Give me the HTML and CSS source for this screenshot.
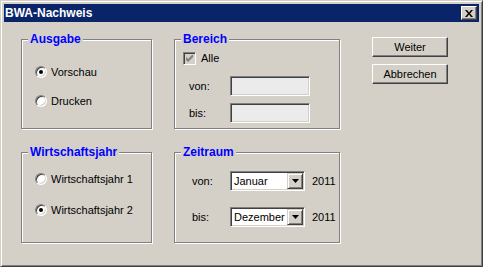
FILE: index.html
```html
<!DOCTYPE html>
<html>
<head>
    <title>BWA-Nachweis</title>
    <link rel="stylesheet" href="styles.css">
</head>
<body>
    <div class="window">
        <div class="titlebar">
            <span class="title">BWA-Nachweis</span>
            <span class="close-btn">
                <svg width="8" height="7" viewBox="0 0 8 7"><path d="M0 0h2l2 2.4L6 0h2L5 3.5 8 7H6L4 4.6 2 7H0l3-3.5z" fill="#000"/></svg>
            </span>
        </div>

        <div class="content">
            <div class="group group-ausgabe">
                <span class="group-title">Ausgabe</span>
                <div class="option"><span class="radio checked"></span>Vorschau</div>
                <div class="option"><span class="radio"></span>Drucken</div>
            </div>

            <div class="group group-bereich">
                <span class="group-title">Bereich</span>
                <div class="option check-row">
                    <span class="checkbox">
                        <svg width="7" height="7" viewBox="0 0 7 7"><path d="M0 2l2 2 5-5v3L2 7 0 5z" fill="#808080"/></svg>
                    </span>Alle
                </div>
                <div class="field-row"><span class="field-label">von:</span><span class="edit"></span></div>
                <div class="field-row"><span class="field-label">bis:</span><span class="edit"></span></div>
            </div>

            <div class="buttons">
                <div class="btn">Weiter</div>
                <div class="btn">Abbrechen</div>
            </div>

            <div class="group group-wj">
                <span class="group-title">Wirtschaftsjahr</span>
                <div class="option"><span class="radio"></span>Wirtschaftsjahr 1</div>
                <div class="option"><span class="radio checked"></span>Wirtschaftsjahr 2</div>
            </div>

            <div class="group group-zeitraum">
                <span class="group-title">Zeitraum</span>
                <div class="field-row">
                    <span class="field-label">von:</span>
                    <span class="combo"><span class="combo-text">Januar</span><span class="combo-btn"><svg width="7" height="4" viewBox="0 0 7 4"><path d="M0 0h7L3.5 4z" fill="#000"/></svg></span></span>
                    <span class="year">2011</span>
                </div>
                <div class="field-row">
                    <span class="field-label">bis:</span>
                    <span class="combo"><span class="combo-text">Dezember</span><span class="combo-btn"><svg width="7" height="4" viewBox="0 0 7 4"><path d="M0 0h7L3.5 4z" fill="#000"/></svg></span></span>
                    <span class="year">2011</span>
                </div>
            </div>
        </div>
    </div>
</body>
</html>
```

FILE: styles.css
```css
body {
    margin: 0;
    font-family: "Liberation Sans", Arial, sans-serif;
    font-size: 11px;
    color: #000;
}

.window {
    width: 483px;
    height: 267px;
    box-sizing: border-box;
    background-color: #D4D0C8;
    border: 1px solid;
    border-color: #D4D0C8 #404040 #404040 #D4D0C8;
    box-shadow: inset 1px 1px #fff, inset -1px -1px #808080;
    padding: 3px;
}

.titlebar {
    height: 18px;
    background-color: #0A246A;
    display: flex;
    align-items: center;
    justify-content: space-between;
    padding: 0 2px 0 1px;
}

.title {
    color: #fff;
    font-weight: bold;
    font-size: 12px;
    line-height: 18px;
}

.close-btn {
    width: 16px;
    height: 14px;
    box-sizing: border-box;
    background-color: #D4D0C8;
    border: 1px solid;
    border-color: #fff #404040 #404040 #fff;
    box-shadow: inset -1px -1px #808080;
    display: flex;
    align-items: center;
    justify-content: center;
}

.content {
    display: grid;
    grid-template-columns: 131px 166px 86px;
    grid-template-rows: 90px 91px;
    column-gap: 22px;
    row-gap: 23px;
    padding: 17px 0 0 17px;
}

.group {
    position: relative;
    box-sizing: border-box;
    border: 1px solid #808080;
    box-shadow: 1px 1px #fff, inset 1px 1px #fff;
    display: flex;
    flex-direction: column;
}

.group-title {
    position: absolute;
    top: -8px;
    left: 6px;
    padding: 0 2px;
    background-color: #D4D0C8;
    color: #0000FF;
    font-weight: bold;
    font-size: 12px;
    line-height: 14px;
}

.option {
    display: flex;
    align-items: center;
    height: 12px;
    line-height: 12px;
}

.group-ausgabe {
    padding: 26px 0 0 13px;
    gap: 17px;
}

.group-wj {
    padding: 20px 0 0 13px;
    gap: 19px;
}

.radio {
    position: relative;
    flex: none;
    width: 12px;
    height: 12px;
    box-sizing: border-box;
    border-radius: 50%;
    background-color: #fff;
    border: 1px solid;
    border-color: #808080 #fff #fff #808080;
    box-shadow: inset 1px 1px #404040, inset -1px -1px #D4D0C8;
    margin-right: 4px;
}

.radio.checked::after {
    content: "";
    position: absolute;
    left: 3px;
    top: 3px;
    width: 4px;
    height: 4px;
    border-radius: 50%;
    background-color: #000;
}

.group-bereich {
    padding: 12px 0 0 8px;
}

.check-row {
    height: 13px;
    line-height: 13px;
    margin-bottom: 11px;
}

.checkbox {
    flex: none;
    width: 13px;
    height: 13px;
    box-sizing: border-box;
    background-color: #D4D0C8;
    border: 1px solid;
    border-color: #808080 #fff #fff #808080;
    box-shadow: inset 1px 1px #404040, inset -1px -1px #D4D0C8;
    display: flex;
    align-items: center;
    justify-content: center;
    margin-right: 5px;
}

.field-row {
    display: flex;
    align-items: center;
    height: 20px;
}

.group-bereich .field-row {
    margin-left: 6px;
    margin-bottom: 7px;
}

.group-bereich .field-label {
    width: 41px;
}

.edit {
    width: 80px;
    height: 20px;
    box-sizing: border-box;
    background-color: #EBEBEB;
    border: 1px solid;
    border-color: #808080 #fff #fff #808080;
    box-shadow: inset 1px 1px #404040, inset -1px -1px #D4D0C8;
}

.group-zeitraum {
    padding: 18px 0 0 17px;
    gap: 16px;
}

.group-zeitraum .field-label {
    width: 38px;
}

.combo {
    width: 75px;
    height: 20px;
    box-sizing: border-box;
    background-color: #fff;
    border: 1px solid;
    border-color: #808080 #fff #fff #808080;
    box-shadow: inset 1px 1px #404040, inset -1px -1px #D4D0C8;
    padding: 1px;
    display: flex;
    justify-content: space-between;
}

.combo-text {
    padding-left: 2px;
    line-height: 16px;
}

.combo-btn {
    width: 16px;
    height: 16px;
    box-sizing: border-box;
    background-color: #D4D0C8;
    border: 1px solid;
    border-color: #D4D0C8 #404040 #404040 #D4D0C8;
    box-shadow: inset 1px 1px #fff, inset -1px -1px #808080;
    display: flex;
    align-items: center;
    justify-content: center;
}

.year {
    margin-left: 7px;
}

.buttons {
    grid-column: 3;
    grid-row: 1 / span 2;
    align-self: start;
    width: 76px;
    margin: -2px 0 0 10px;
    display: flex;
    flex-direction: column;
    gap: 7px;
}

.btn {
    height: 20px;
    box-sizing: border-box;
    background-color: #D4D0C8;
    border: 1px solid;
    border-color: #fff #404040 #404040 #fff;
    box-shadow: inset -1px -1px #808080;
    text-align: center;
    line-height: 18px;
}
```
